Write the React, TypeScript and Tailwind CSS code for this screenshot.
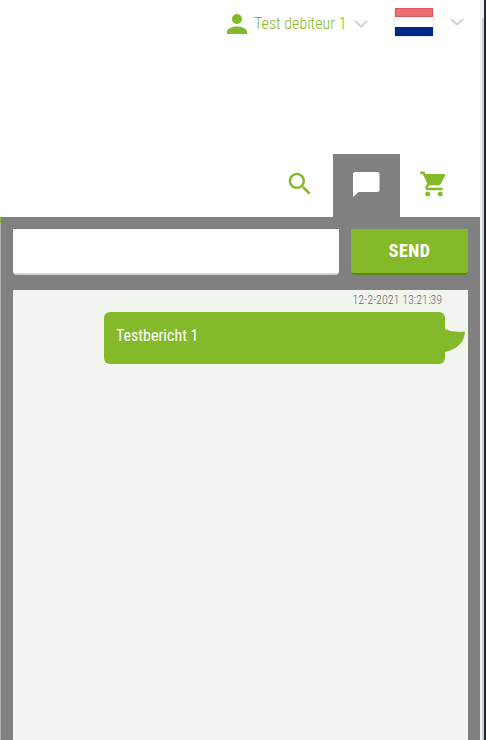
import React, { useState } from "react";

const ChevronDown = ({ className = "" }: { className?: string }) => (
  <svg className={`h-2 w-3.5 ${className}`} viewBox="0 0 14 8" fill="none" stroke="#d3d6d8" strokeWidth="2.2" aria-hidden="true">
    <path d="M1 1l6 5.6L13 1" />
  </svg>
);

function TopBar() {
  return (
    <header className="flex h-11 items-center justify-end pr-4">
      <button type="button" className="flex items-center pt-1 text-[#84b929]">
        <svg className="-ml-1 h-[30px] w-[30px]" viewBox="0 0 24 24" fill="currentColor" aria-hidden="true">
          <path d="M12 12c2.21 0 4-1.79 4-4s-1.79-4-4-4-4 1.79-4 4 1.79 4 4 4zm0 2c-2.67 0-8 1.34-8 4v2h16v-2c0-2.66-5.33-4-8-4z" />
        </svg>
        <span className="ml-0.5 w-[92px] whitespace-nowrap text-left text-base leading-6 font-light">Test debiteur 1</span>
        <ChevronDown className="ml-2" />
      </button>
      <button type="button" aria-label="Nederlands" className="ml-[26px] flex items-center">
        <svg className="h-[30px] w-10" viewBox="0 0 40 30" aria-hidden="true">
          <rect x="0.5" y="1.5" width="39" height="28" rx="1" fill="#c9cbd0" />
          <rect x="1" y="1" width="38" height="9" fill="#e5565c" />
          <rect x="2" y="2" width="36" height="7" fill="#ea6f74" />
          <rect x="1" y="10" width="38" height="10" fill="#fff" />
          <rect x="1" y="20" width="38" height="9" fill="#002a83" />
        </svg>
        <ChevronDown className="ml-4" />
      </button>
    </header>
  );
}

function Tabs() {
  return (
    <nav className="mt-[110px] flex h-[63px] justify-end pr-[13px]">
      <button type="button" aria-label="Zoeken" className="flex w-[67px] items-center justify-center pb-1 text-[#84b929]">
        <svg className="h-[30px] w-[30px]" viewBox="0 0 24 24" fill="currentColor" aria-hidden="true">
          <path d="M15.5 14h-.79l-.28-.27C15.41 12.59 16 11.11 16 9.5 16 5.91 13.09 3 9.5 3S3 5.91 3 9.5 5.91 16 9.5 16c1.61 0 3.09-.59 4.23-1.57l.27.28v.79l5 4.99L20.49 19l-4.99-5zm-6 0C7.01 14 5 11.99 5 9.5S7.01 5 9.5 5 14 7.01 14 9.5 11.99 14 9.5 14z" />
        </svg>
      </button>
      <button type="button" aria-label="Berichten" className="flex w-[67px] items-center justify-center bg-[#808080] pr-0.5 pb-1 text-white">
        <svg className="h-8 w-8" viewBox="0 0 32 32" fill="currentColor" aria-hidden="true">
          <path d="M27.5 4H5Q3 4 3 6V29L8.5 24H27.5Q29.5 24 29.5 22V6Q29.5 4 27.5 4Z" />
        </svg>
      </button>
      <button type="button" aria-label="Winkelwagen" className="flex w-[67px] items-center justify-center pb-1 text-[#84b929]">
        <svg className="h-[30px] w-[30px]" viewBox="0 0 24 24" fill="currentColor" aria-hidden="true">
          <path d="M7 18c-1.1 0-1.99.9-1.99 2S5.9 22 7 22s2-.9 2-2-.9-2-2-2zM1 2v2h2l3.6 7.59-1.35 2.45c-.16.28-.25.61-.25.96 0 1.1.9 2 2 2h12v-2H7.42c-.14 0-.25-.11-.25-.25l.03-.12.9-1.63h7.45c.75 0 1.41-.41 1.75-1.03l3.58-6.49A1 1 0 0 0 20 4H5.21l-.94-2H1zm16 16c-1.1 0-1.99.9-1.99 2s.89 2 1.99 2 2-.9 2-2-.9-2-2-2z" />
        </svg>
      </button>
    </nav>
  );
}

function Chat() {
  const [text, setText] = useState("");
  return (
    <main className="relative flex grow flex-col border-l border-[#b0b0b0] bg-[#808080] px-3 pt-3">
      <span className="absolute top-0 -left-px h-1.5 w-px bg-[#84b929]" />
      <form className="flex gap-3" onSubmit={(e) => e.preventDefault()}>
        <input
          aria-label="Bericht"
          value={text}
          onChange={(e) => setText(e.target.value)}
          className="h-[46px] min-w-0 grow rounded-b-sm border-b-2 border-[#d4d4d4] bg-white px-3 text-base outline-none"
        />
        <button
          type="submit"
          className="h-[46px] w-[117px] rounded-b-sm border-b-2 border-[#5d851b] bg-[#84b929] text-lg font-bold tracking-wide text-white"
        >
          SEND
        </button>
      </form>
      <section className="mt-[15px] grow bg-[#f2f4f0]">
        <time className="block h-[22px] pr-[26px] text-right text-xs leading-5 font-light text-[#6b6b6b]">12-2-2021 13:21:39</time>
        <div className="relative mr-[23px] ml-[91px] rounded-md bg-[#84b929] px-3 pt-3 pb-4 text-base leading-6 text-white">
          Testbericht 1
          <svg className="absolute top-[17px] left-full h-[23px] w-5" viewBox="0 0 20 23" fill="#84b929" aria-hidden="true">
            <path d="M0 0C6 3 13 3 20 2.5C20 14 10 21 0 23Z" />
          </svg>
        </div>
      </section>
    </main>
  );
}

export default function App() {
  return (
    <div className="flex min-h-screen bg-white font-['Liberation_Sans_Narrow','Roboto_Condensed','Open_Sans_Condensed','Liberation_Sans',sans-serif]">
      <div className="flex min-w-0 grow flex-col">
        <TopBar />
        <Tabs />
        <Chat />
      </div>
      <div className="flex w-1 shrink-0 flex-col bg-[#f0f0f0]">
        <div className="mt-[18px] ml-auto w-0.5 grow bg-[#cfcfd1]" />
      </div>
      <div className="w-0.5 shrink-0 bg-[#252932]" />
    </div>
  );
}
